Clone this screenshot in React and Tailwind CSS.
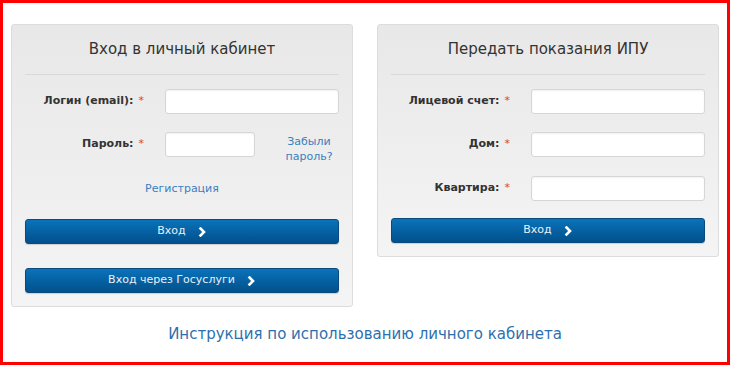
// Личный кабинет - вход и передача показаний ИПУ
import React from 'react';

const font = { fontFamily: '"DejaVu Sans", Verdana, sans-serif' };

const Chevron = () => (
  <svg width="9" height="10" viewBox="0 0 9 10" className="ml-[12px]">
    <polyline points="2.5,1.5 6,5 2.5,8.5" fill="none" stroke="#ffffff" strokeWidth="2.6" strokeLinecap="square" />
  </svg>
);

const BlueButton = ({ children, className = '' }) => (
  <button
    type="button"
    className={`w-full h-[25px] flex items-center justify-center rounded-[3px] border border-[#0b4a7c] bg-gradient-to-b from-[#0b73ba] to-[#02508c] text-[11px] text-[#e8f1f8] shadow-[0_1px_1px_rgba(0,0,0,0.15)] ${className}`}
  >
    <span>{children}</span>
    <Chevron />
  </button>
);

const Field = ({ label, inputWidth = 'w-[174px]', after = null, className = '' }) => (
  <div className={`flex items-center h-[25px] ${className}`}>
    <div className="w-[140px] flex justify-end pr-[21px] text-[11px] font-bold text-[#333]">
      <span>{label}</span>
      <span className="ml-[5px] text-[#e53b3b] font-normal">*</span>
    </div>
    <input
      type="text"
      className={`${inputWidth} h-[25px] bg-white border border-[#d6d6d6] rounded-[3px] shadow-[inset_0_1px_2px_rgba(0,0,0,0.06)] outline-none`}
    />
    {after}
  </div>
);

const Card = ({ title, children }) => (
  <div className="w-[342px] border border-[#dcdcdc] rounded-[3px] bg-gradient-to-b from-[#e8e8e8] to-[#f4f4f4] px-[13px] pb-[13px]">
    <div className="h-[50px] flex items-center justify-center border-b border-[#d9d9d9] text-[15px] text-[#333]">
      {title}
    </div>
    {children}
  </div>
);

const App = () => {
  return (
    <div style={font} className="w-[730px] h-[365px] border-[3px] border-[#ff0000] bg-white pt-[21px] px-[8px]">
      <div className="flex items-start gap-[24px]">
        {/* Вход в личный кабинет */}
        <Card title="Вход в личный кабинет">
          <Field label="Логин (email):" className="mt-[14px]" />
          <Field
            label="Пароль:"
            inputWidth="w-[90px]"
            className="mt-[18px]"
            after={
              <a className="self-start mt-[2px] ml-[24px] w-[60px] text-center text-[11px] leading-[15px] text-[#3a7fc1]">
                Забыли пароль?
              </a>
            }
          />
          <div className="mt-[25px] h-[14px] leading-[14px] text-center text-[11px] text-[#3a7fc1]">
            Регистрация
          </div>
          <BlueButton className="mt-[23px]">Вход</BlueButton>
          <BlueButton className="mt-[24px]">Вход через Госуслуги</BlueButton>
        </Card>

        {/* Передать показания ИПУ */}
        <Card title="Передать показания ИПУ">
          <Field label="Лицевой счет:" className="mt-[14px]" />
          <Field label="Дом:" className="mt-[18px]" />
          <Field label="Квартира:" className="mt-[19px]" />
          <BlueButton className="mt-[17px]">Вход</BlueButton>
        </Card>
      </div>

      <div className="mt-[17px] text-center text-[15px] leading-[20px] text-[#2d70ae]">
        Инструкция по использованию личного кабинета
      </div>
    </div>
  );
};

export default App;
